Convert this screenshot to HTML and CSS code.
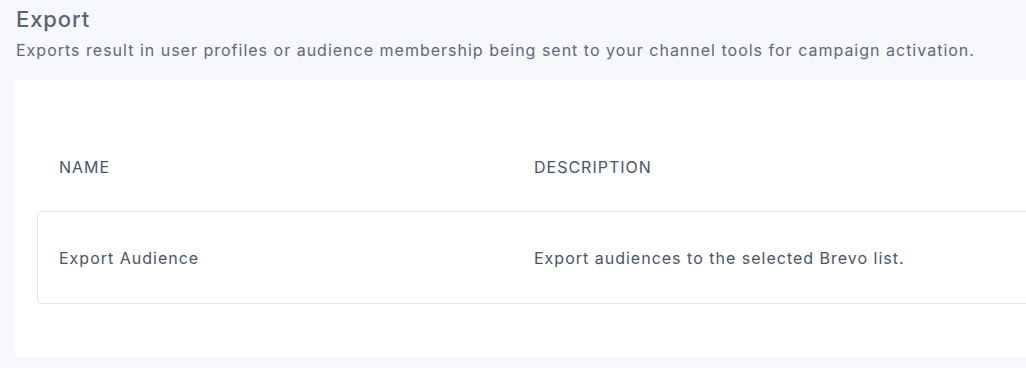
FILE: index.html
```html
<!DOCTYPE html>
<html>
<head>
<meta charset="utf-8">
<link rel="stylesheet" href="styles.css">
</head>
<body>
<div class="page">
  <header class="head">
    <h1 class="title">Export</h1>
    <p class="subtitle">Exports result in user profiles or audience membership being sent to your channel tools for campaign activation.</p>
  </header>
  <section class="panel">
    <div class="thead">
      <div class="col col-name">NAME</div>
      <div class="col col-desc">DESCRIPTION</div>
    </div>
    <div class="row">
      <div class="col col-name">Export Audience</div>
      <div class="col col-desc">Export audiences to the selected Brevo list.</div>
    </div>
  </section>
</div>
</body>
</html>
```

FILE: styles.css
```css
html, body {
  margin: 0;
  padding: 0;
}
body {
  background: #f7f8fb;
  font-family: Inter, "Noto Sans", sans-serif;
  color: #4a5568;
  width: 1026px;
  height: 368px;
  overflow: hidden;
}
.page {
  padding: 5px 0 0 15px;
}
.head {
  padding-left: 1px;
}
.title {
  margin: 0;
  font-size: 22px;
  line-height: 28px;
  font-weight: 500;
  letter-spacing: 0.9px;
  color: #5a6476;
}
.subtitle {
  margin: 6px 0 0;
  font-size: 16px;
  line-height: 22px;
  letter-spacing: 1px;
  white-space: nowrap;
  color: #5f6878;
}
.panel {
  margin-top: 19px;
  background: #ffffff;
  width: 1100px;
  height: 277px;
  box-sizing: border-box;
  padding: 67px 0 0 22px;
}
.thead, .row {
  display: flex;
  align-items: center;
  font-size: 16px;
  letter-spacing: 1px;
  color: #4a5568;
}
.thead {
  height: 39px;
  padding-left: 22px;
  margin-bottom: 25px;
}
.row {
  height: 91px;
  border: 1px solid #e4e6ea;
  border-radius: 4px;
  padding-left: 21px;
}
.col-name {
  width: 475px;
}
```
